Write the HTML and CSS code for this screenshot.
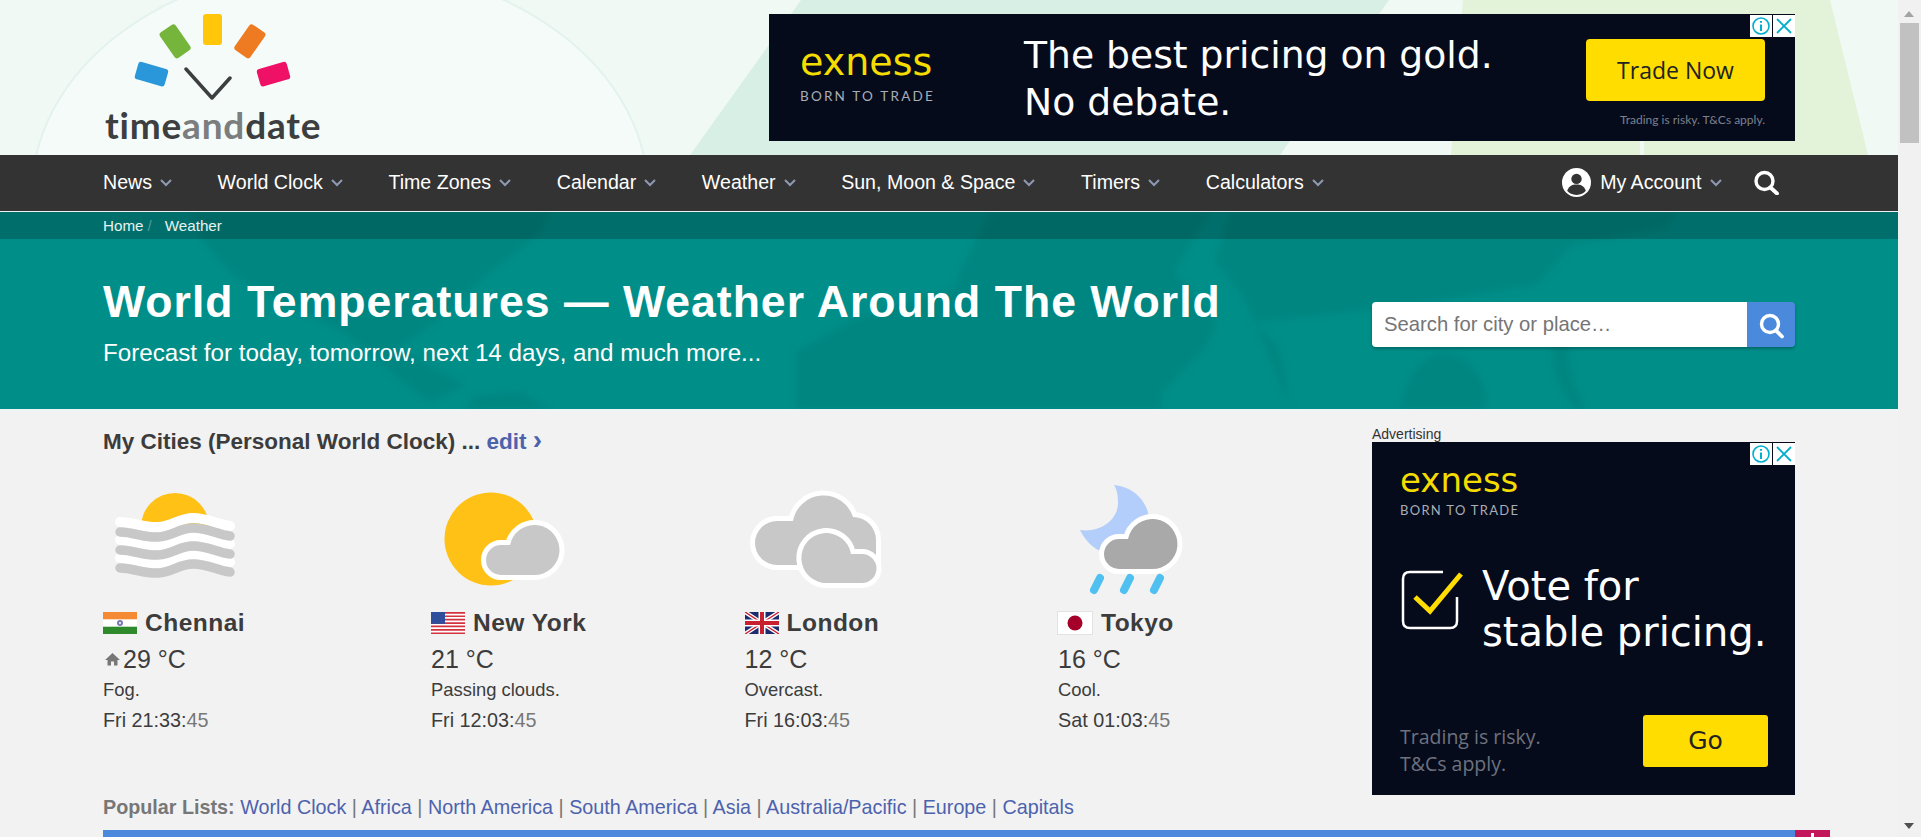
FILE: index.html
```html
<!DOCTYPE html>
<html lang="en">
<head>
    <meta charset="UTF-8">
    <meta name="viewport" content="width=device-width, initial-scale=1.0">
    <title>World Temperatures — Weather Around The World</title>
    <link rel="stylesheet" href="styles.css">
</head>
<body>
    <svg class="defs" width="0" height="0">
        <defs>
            <path id="chev" d="M1 1l5 5 5-5" fill="none" stroke-width="2"/>
            <path id="cloud" d="M70 90A15 15 0 0 1 70 60H79A25 25 0 1 1 103 90Z"/>
            <path id="wave" d="M17 0C30 0 42 6 55 5C70 4 76-4 90-4C105-4 115 3 127 4" fill="none" stroke-linecap="round"/>
        </defs>
    </svg>
    <div class="page">
        <header class="masthead">
            <svg class="masthead-bg" viewBox="0 0 1898 155" width="1898" height="155">
                <path d="M801 0H1389L1280 155H690Z" fill="#d8efe6"/>
                <path d="M1463 0H1830L1868 155H1451Z" fill="#e2f3da"/>
                <path d="M1642 130V155" stroke="#f0f9f3" stroke-width="4"/>
                <ellipse cx="340" cy="193" rx="308" ry="228" fill="#f5fbf9" stroke="#e3f2ee" stroke-width="2"/>
            </svg>
            <a class="logo" href="#">
                <svg class="logo-mark" viewBox="0 0 170 100" width="170" height="100">
                    <rect x="69" y="14" width="19" height="31" rx="3" fill="#ffc60a"/>
                    <rect x="32" y="26" width="19" height="31" rx="3" fill="#76b53c" transform="rotate(-35 41 42)"/>
                    <rect x="106" y="26" width="19" height="31" rx="3" fill="#ee7b22" transform="rotate(35 116 42)"/>
                    <rect x="2" y="65" width="31" height="18" rx="3" fill="#2a97da" transform="rotate(16 17 74)"/>
                    <rect x="124" y="65" width="31" height="18" rx="3" fill="#ee1166" transform="rotate(-16 140 74)"/>
                    <path d="M52 69L78 98L96 78" fill="none" stroke="#3c3e40" stroke-width="3.5" stroke-linecap="round" stroke-linejoin="round"/>
                </svg>
                <span class="logo-text">time<span class="logo-and">and</span>date</span>
            </a>
            <div class="ad-banner">
                <div class="ad-brand">
                    <div class="exness">exness</div>
                    <div class="born">BORN TO TRADE</div>
                </div>
                <div class="ad-headline">The best pricing on gold.<br>No debate.</div>
                <div class="ad-cta">
                    <div class="ad-btn">Trade Now</div>
                    <div class="ad-small">Trading is risky. T&amp;Cs apply.</div>
                </div>
                <div class="ad-choices">
                    <svg viewBox="0 0 22 22"><circle cx="11" cy="11" r="8" fill="none" stroke="#00aecd" stroke-width="1.6"/><path d="M11 9.5V16M11 6v1.8" stroke="#00aecd" stroke-width="2"/></svg>
                    <svg viewBox="0 0 22 22"><path d="M4 4L18 18M18 4L4 18" stroke="#00aecd" stroke-width="1.8"/></svg>
                </div>
            </div>
        </header>

        <nav class="topnav">
            <a href="#">News <svg class="chev"><use href="#chev"/></svg></a>
            <a href="#">World Clock <svg class="chev"><use href="#chev"/></svg></a>
            <a href="#">Time Zones <svg class="chev"><use href="#chev"/></svg></a>
            <a href="#">Calendar <svg class="chev"><use href="#chev"/></svg></a>
            <a href="#">Weather <svg class="chev"><use href="#chev"/></svg></a>
            <a href="#">Sun, Moon &amp; Space <svg class="chev"><use href="#chev"/></svg></a>
            <a href="#">Timers <svg class="chev"><use href="#chev"/></svg></a>
            <a href="#">Calculators <svg class="chev"><use href="#chev"/></svg></a>
            <a href="#" class="account">
                <svg viewBox="0 0 28 28" width="29" height="29"><circle cx="14" cy="14" r="14" fill="#fff"/><circle cx="14" cy="10.5" r="5" fill="#333"/><path d="M5 22c2-5 5-6 9-6s7 1 9 6c-2 2.500-5 4-9 4s-7-1.500-9-4Z" fill="#333"/></svg>
                My Account <svg class="chev"><use href="#chev"/></svg>
            </a>
            <a href="#" class="nav-search">
                <svg viewBox="0 0 27 25" width="27" height="25"><circle cx="11.500" cy="11" r="8.500" fill="none" stroke="#fff" stroke-width="3.400"/><path d="M17.500 17.500L24 23.500" stroke="#fff" stroke-width="3.800" stroke-linecap="round"/></svg>
            </a>
        </nav>

        <section class="hero">
            <svg class="hero-map" viewBox="0 212 1898 197" width="1898" height="197">
                <path d="M202 240L233 275L288 305L343 332L416 392L430 402L465 385L398 348L441 318L490 272L539 235L551 212H190Z"/>
                <path d="M465 409L475 396L520 392L551 409Z"/>
                <path d="M796 409V352L857 318L955 288L960 272L990 212H1210L1174 272L1217 322L1205 348L1162 392V409Z"/>
                <path d="M1291 409L1279 348L1254 322L1350 312L1440 300L1536 285L1572 245L1665 229L1677 212H1230L1215 260L1245 300Z"/>
                <path d="M1400 409C1405 380 1420 355 1445 353C1475 358 1488 385 1486 409Z"/>
                <path d="M1560 330C1545 350 1555 385 1575 409H1586C1570 380 1565 355 1572 335Z"/>
            </svg>
            <div class="crumbs"><a href="#">Home</a><span class="crumb-sep">/</span><a href="#">Weather</a></div>
            <div class="hero-body">
                <div>
                    <h1>World Temperatures — Weather Around The World</h1>
                    <p>Forecast for today, tomorrow, next 14 days, and much more...</p>
                </div>
                <form class="place-search">
                    <input type="text" placeholder="Search for city or place…">
                    <button type="button">
                        <svg viewBox="0 0 27 27" width="27" height="27"><circle cx="12" cy="12" r="8.500" fill="none" stroke="#fff" stroke-width="3.400"/><path d="M18 18.500L24 24.500" stroke="#fff" stroke-width="3.800" stroke-linecap="round"/></svg>
                    </button>
                </form>
            </div>
        </section>

        <main class="content">
            <div class="cities-col">
                <h2>My Cities (Personal World Clock) ... <a href="#">edit <span class="edit-arrow">›</span></a></h2>
                <div class="cities">
                    <div class="city">
                        <svg class="wx" viewBox="0 0 140 110">
                            <path d="M38 42A34 34 0 0 1 106 42Z" fill="#ffc116"/>
                            <g stroke="#fff" stroke-width="10">
                                <use href="#wave" transform="translate(0 37)"/>
                                <use href="#wave" transform="translate(0 55)"/>
                                <use href="#wave" transform="translate(0 73)"/>
                            </g>
                            <g stroke="#c8c8c8" stroke-width="9.500">
                                <use href="#wave" transform="translate(0 47)"/>
                                <use href="#wave" transform="translate(0 65)"/>
                                <use href="#wave" transform="translate(0 83)"/>
                            </g>
                        </svg>
                        <div class="city-name">
                            <svg class="flag" viewBox="0 0 34 22"><rect width="34" height="22" fill="#fff"/><rect width="34" height="7.300" fill="#f58a35"/><rect y="14.700" width="34" height="7.300" fill="#2f8a2b"/><circle cx="17" cy="11" r="3" fill="#7a7ab8"/><circle cx="17" cy="11" r="1" fill="#fff"/></svg>
                            Chennai
                        </div>
                        <div class="temp"><svg class="home" viewBox="0 0 15 14"><path d="M7.500 1L0 8h2.500v5.500h3.500V9.500h3v4h3.500V8H15Z" fill="#777"/></svg>29 °C</div>
                        <div class="desc">Fog.</div>
                        <div class="clock">Fri 21:33:<span>45</span></div>
                    </div>
                    <div class="city">
                        <svg class="wx" viewBox="0 0 140 110">
                            <circle cx="60" cy="54" r="46.500" fill="#ffc116"/>
                            <use href="#cloud" class="cloud" fill="#c8c8c8"/>
                        </svg>
                        <div class="city-name">
                            <svg class="flag" viewBox="0 0 34 22"><rect width="34" height="22" fill="#fff"/><path d="M0 0H34V1.700H0ZM0 3.400H34V5.100H0ZM0 6.800H34V8.500H0ZM0 10.200H34V11.900H0ZM0 13.600H34V15.300H0ZM0 17H34V18.700H0ZM0 20.400H34V22H0Z" fill="#d2333f"/><rect width="14" height="11.900" fill="#2f4f9c"/></svg>
                            New York
                        </div>
                        <div class="temp">21 °C</div>
                        <div class="desc">Passing clouds.</div>
                        <div class="clock">Fri 12:03:<span>45</span></div>
                    </div>
                    <div class="city">
                        <svg class="wx" viewBox="0 0 140 110">
                            <path class="cloud" d="M32 80A22 22 0 0 1 32 36H48A31 31 0 0 1 108 32A23 23 0 0 1 131 55V80Z" fill="#c8c8c8"/>
                            <path class="cloud" d="M82 98A25 25 0 1 1 106 69H117A14.500 14.500 0 0 1 117 98Z" fill="#c8c8c8"/>
                        </svg>
                        <div class="city-name">
                            <svg class="flag flag-uk" viewBox="0 0 34 22"><rect width="34" height="22" fill="#1c2a70"/><path d="M0 0L34 22M34 0L0 22" stroke="#fff" stroke-width="4"/><path d="M0 0L34 22M34 0L0 22" stroke="#c8202f" stroke-width="1.400"/><path d="M17 0V22M0 11H34" stroke="#fff" stroke-width="7"/><path d="M17 0V22M0 11H34" stroke="#c8202f" stroke-width="4"/></svg>
                            London
                        </div>
                        <div class="temp">12 °C</div>
                        <div class="desc">Overcast.</div>
                        <div class="clock">Fri 16:03:<span>45</span></div>
                    </div>
                    <div class="city">
                        <svg class="wx" viewBox="0 0 140 110">
                            <path d="M56 0C78 2 93 20 91 40C85 62 62 72 45 67C35 64 27 55 22 45C42 48 60 35 60 18C60 10 59 5 56 0Z" fill="#b3cefb"/>
                            <use href="#cloud" class="cloud" fill="#a9a9a9" transform="translate(-9 -6)"/>
                            <path d="M42 93L36 105M72 93L66 105M102 93L96 105" stroke="#4fc0f0" stroke-width="8" stroke-linecap="round"/>
                        </svg>
                        <div class="city-name">
                            <svg class="flag flag-jp" viewBox="0 0 36 24"><rect x=".5" y=".5" width="35" height="23" fill="#fff" stroke="#e2e2e2"/><circle cx="18" cy="12" r="7.500" fill="#a5002a"/></svg>
                            Tokyo
                        </div>
                        <div class="temp">16 °C</div>
                        <div class="desc">Cool.</div>
                        <div class="clock">Sat 01:03:<span>45</span></div>
                    </div>
                </div>
                <p class="popular"><b>Popular Lists:</b> <a href="#">World Clock</a> | <a href="#">Africa</a> | <a href="#">North America</a> | <a href="#">South America</a> | <a href="#">Asia</a> | <a href="#">Australia/Pacific</a> | <a href="#">Europe</a> | <a href="#">Capitals</a></p>
            </div>
            <aside class="ad-col">
                <div class="ad-label">Advertising</div>
                <div class="ad-side">
                    <div class="exness exness-side">exness</div>
                    <div class="born born-side">BORN TO TRADE</div>
                    <div class="vote">
                        <svg viewBox="0 0 66 66" width="66" height="66">
                            <path d="M43 3H10Q3 3 3 10V52Q3 59 10 59H50Q57 59 57 52V28" fill="none" stroke="#fff" stroke-width="2.500"/>
                            <path d="M15 28L30 42L61 5" fill="none" stroke="#ffdd00" stroke-width="5"/>
                        </svg>
                        <div class="vote-text">Vote for<br>stable pricing.</div>
                    </div>
                    <div class="ad-side-foot">
                        <div class="risk">Trading is risky.<br>T&amp;Cs apply.</div>
                        <div class="go-btn">Go</div>
                    </div>
                    <div class="ad-choices">
                        <svg viewBox="0 0 22 22"><circle cx="11" cy="11" r="8" fill="none" stroke="#00aecd" stroke-width="1.600"/><path d="M11 9.500V16M11 6v1.800" stroke="#00aecd" stroke-width="2"/></svg>
                        <svg viewBox="0 0 22 22"><path d="M4 4L18 18M18 4L4 18" stroke="#00aecd" stroke-width="1.800"/></svg>
                    </div>
                </div>
            </aside>
        </main>

        <div class="table-bar">
            <div class="table-head"></div>
            <div class="table-tab"><span></span></div>
        </div>
    </div>
    <div class="scrollbar">
        <div class="sb-up"></div>
        <div class="sb-thumb"></div>
        <div class="sb-down"></div>
    </div>
</body>
</html>
```

FILE: styles.css
```css
html, body {
    height: 837px;
    overflow: hidden;
}
body {
    margin: 0;
    display: flex;
    font-family: "Liberation Sans", Arial, sans-serif;
    font-size: 19.6px;
    color: #3c3c3c;
    background: #f2f2f2;
}
a {
    text-decoration: none;
    color: inherit;
}
.defs {
    position: absolute;
}
.page {
    flex: 1;
    min-width: 0;
    height: 837px;
    overflow: hidden;
}

/* masthead */
.masthead {
    position: relative;
    height: 155px;
    padding: 0 103px;
    display: flex;
    justify-content: space-between;
    overflow: hidden;
    background: #f0f9f3;
}
.masthead-bg {
    position: absolute;
    top: 0;
    left: 0;
}
.logo {
    position: relative;
    width: 222px;
}
.logo-mark {
    display: block;
    margin-left: 31px;
}
.logo-text {
    display: block;
    font-family: Lato, sans-serif;
    font-weight: 700;
    font-size: 37px;
    letter-spacing: .8px;
    line-height: 38px;
    margin: 6px 0 0 2px;
    color: #3c3e40;
    white-space: nowrap;
}
.logo-and {
    color: #7b7d7e;
}

/* ads */
.ad-banner {
    position: relative;
    width: 1026px;
    height: 127px;
    margin-top: 14px;
    display: flex;
    padding-left: 31px;
    box-sizing: border-box;
    background: #060b1c;
    font-family: Lato, sans-serif;
}
.ad-brand {
    width: 136px;
    margin-right: 88px;
    padding-top: 26px;
}
.exness {
    font-family: "DejaVu Sans", sans-serif;
    font-size: 38px;
    line-height: 44px;
    color: #f5dc00;
}
.born {
    margin-top: 4px;
    font-size: 13.500px;
    line-height: 16px;
    letter-spacing: 2.200px;
    color: #a9adb5;
    white-space: nowrap;
}
.ad-headline {
    flex: 1;
    padding-top: 18px;
    font-family: "DejaVu Sans", sans-serif;
    font-size: 37.700px;
    line-height: 46.500px;
    color: #fff;
    white-space: nowrap;
}
.ad-cta {
    width: 179px;
    margin-right: 30px;
    padding-top: 25px;
}
.ad-btn {
    height: 62px;
    line-height: 62px;
    text-align: center;
    font-family: "Open Sans", sans-serif;
    font-size: 23px;
    color: #222;
    background: #ffdd00;
    border-radius: 4px;
}
.ad-small {
    margin-top: 12px;
    text-align: right;
    font-size: 12px;
    line-height: 14px;
    color: #7d818c;
    white-space: nowrap;
}
.ad-choices {
    position: absolute;
    top: 1px;
    right: 0;
    display: flex;
    gap: 1px;
    background: #060b1c;
}
.ad-choices svg {
    display: block;
    width: 22px;
    height: 22px;
    background: #fff;
}

/* nav */
.topnav {
    padding: 0 103px 2px;
    box-sizing: border-box;
    height: 57px;
    display: flex;
    align-items: center;
    gap: 45.600px;
    background: #333;
    border-bottom: 1px solid #eef2f2;
    color: #fff;
}
.topnav a {
    display: flex;
    align-items: center;
    gap: 8px;
    white-space: nowrap;
}
.chev {
    width: 12px;
    height: 8px;
    margin-top: 2px;
    stroke: #8e99b4;
}
.topnav .account {
    margin-left: auto;
    gap: 9px;
}
.topnav .nav-search {
    margin: 0 15px 0 -15px;
}

/* hero */
.hero {
    position: relative;
    height: 197px;
    background: #008e89;
    color: #fff;
    overflow: hidden;
}
.hero-map {
    position: absolute;
    top: 0;
    left: 0;
    fill: #008681;
    filter: blur(3px);
}
.crumbs {
    position: relative;
    height: 27px;
    padding: 0 103px;
    display: flex;
    align-items: center;
    font-size: 15.200px;
    background: rgba(0, 0, 0, .22);
    color: #e6f2f1;
}
.crumb-sep {
    margin: 0 13px 0 4px;
    color: #4f9c98;
}
.hero-body {
    position: relative;
    padding: 0 103px;
    display: flex;
    justify-content: space-between;
    align-items: flex-start;
}
.hero h1 {
    margin: 37px 0 0;
    font-size: 44.600px;
    line-height: 52px;
    letter-spacing: 1px;
    white-space: nowrap;
}
.hero p {
    margin: 12px 0 0;
    font-size: 24.200px;
    line-height: 26px;
}
.place-search {
    display: flex;
    width: 423px;
    height: 45px;
    margin-top: 63px;
    border-radius: 4px;
    box-shadow: 0 2px 3px rgba(0, 0, 0, .25);
}
.place-search input {
    flex: 1;
    min-width: 0;
    padding: 0 12px;
    border: 0;
    border-radius: 4px 0 0 4px;
    font-family: inherit;
    font-size: 20.250px;
    background: #fff;
}
.place-search input::placeholder {
    color: #757575;
    opacity: 1;
}
.place-search button {
    width: 48px;
    padding: 0;
    border: 0;
    border-radius: 0 4px 4px 0;
    background: #4a89dc;
}
.place-search svg {
    display: block;
    margin: 1px auto 0;
}

/* content */
.content {
    height: 419px;
    padding: 0 103px;
    display: flex;
    justify-content: space-between;
    overflow: hidden;
    border-top: 2px solid #edf5f5;
}
.cities-col {
    flex: 1;
    min-width: 0;
}
.cities-col h2 {
    margin: 18px 0 30px;
    font-size: 22.500px;
    line-height: 26px;
}
.cities-col h2 a {
    color: #4d62ad;
}
.edit-arrow {
    font-size: 28px;
    line-height: 20px;
}
.cities {
    display: grid;
    grid-template-columns: 328px 313.500px 313.500px 1fr;
}
.wx {
    display: block;
    width: 140px;
    height: 110px;
    margin-bottom: 15px;
}
.cloud {
    stroke: #fff;
    stroke-width: 10;
    paint-order: stroke;
    stroke-linejoin: round;
}
.city-name {
    display: flex;
    align-items: center;
    gap: 8px;
    height: 26px;
    font-size: 24.500px;
    font-weight: 700;
    letter-spacing: .5px;
}
.flag {
    flex: none;
    width: 34px;
    height: 22px;
    margin-top: -1px;
}
.flag-jp {
    width: 36px;
    height: 24px;
    margin-left: -1px;
}
.temp {
    display: flex;
    align-items: center;
    margin-top: 8px;
    font-size: 25px;
    line-height: 30px;
}
.home {
    width: 15px;
    height: 14px;
    margin: 0 3px 0 2px;
}
.desc {
    margin-top: 4px;
    font-size: 18.400px;
    line-height: 24px;
}
.clock {
    margin-top: 6px;
    font-size: 19.800px;
    line-height: 24px;
}
.clock span {
    color: #777;
}
.popular {
    margin: 63px 0 0;
    font-size: 19.750px;
    line-height: 24px;
    white-space: nowrap;
    color: #777;
}
.popular a {
    color: #4d62ad;
}

/* side ad */
.ad-col {
    width: 423px;
    padding-top: 16px;
}
.ad-label {
    font-size: 14px;
    line-height: 15px;
    color: #333;
}
.ad-side {
    position: relative;
    height: 353px;
    padding: 18px 28px 0;
    box-sizing: border-box;
    background: #060b1c;
    color: #fff;
    font-family: "DejaVu Sans", sans-serif;
}
.exness-side {
    font-size: 34px;
    line-height: 40px;
}
.born-side {
    margin-top: 2px;
    font-family: Lato, sans-serif;
    font-size: 13px;
    letter-spacing: 1.300px;
}
.vote {
    display: flex;
    gap: 16px;
    margin-top: 43px;
}
.vote svg {
    flex: none;
    margin-top: 8px;
}
.vote-text {
    margin-top: 2px;
    font-size: 40px;
    line-height: 46px;
    white-space: nowrap;
}
.ad-side-foot {
    display: flex;
    justify-content: space-between;
    align-items: flex-start;
    margin-top: 60px;
}
.risk {
    margin-top: 8px;
    font-family: "Open Sans", sans-serif;
    font-size: 19.500px;
    line-height: 27px;
    color: #6d727e;
}
.go-btn {
    width: 125px;
    height: 52px;
    margin-right: -1px;
    line-height: 52px;
    text-align: center;
    font-size: 25px;
    color: #222;
    background: #ffdd00;
    border-radius: 3px;
}

/* table head peeking at the fold */
.table-bar {
    display: flex;
    height: 7px;
    margin-left: 103px;
}
.table-head {
    width: 1692px;
    background: #4a89dc;
}
.table-tab {
    position: relative;
    width: 35px;
    background: #c2185b;
}
.table-tab span {
    position: absolute;
    top: 3px;
    left: 16px;
    width: 3px;
    height: 4px;
    background: #fff;
}

/* fake window scrollbar */
.scrollbar {
    position: relative;
    flex: none;
    width: 23px;
    background: #f1f1f1;
}
.sb-thumb {
    position: absolute;
    top: 23px;
    left: 2px;
    width: 19px;
    height: 120px;
    background: #c1c1c1;
}
.sb-up, .sb-down {
    position: absolute;
    left: 6px;
    width: 0;
    height: 0;
    border: 5px solid transparent;
}
.sb-up {
    top: 6px;
    border-bottom: 6px solid #a3a3a3;
}
.sb-down {
    bottom: 3px;
    border-top: 6px solid #505050;
}
```
